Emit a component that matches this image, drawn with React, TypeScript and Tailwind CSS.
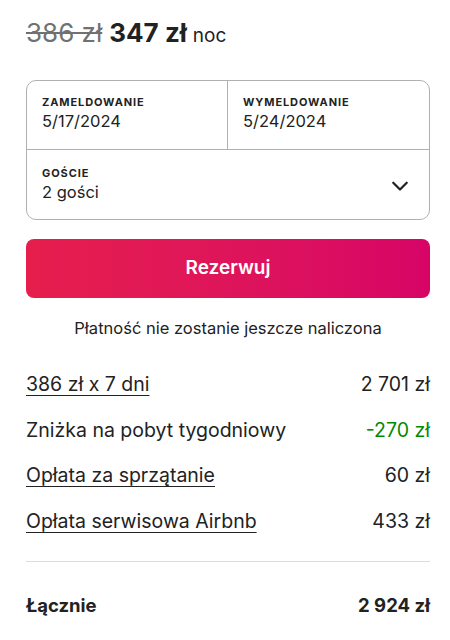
import React from "react";

const font = { fontFamily: "Inter, 'Noto Sans', sans-serif" };

function Row({ label, value, underline, green }: { label: string; value: string; underline?: boolean; green?: boolean }) {
  return (
    <div className="flex items-center justify-between h-[45.5px]">
      <span className={`text-[19.5px] text-[#222222] ${underline ? "underline underline-offset-[4px] decoration-[1px] decoration-[#222222]" : ""}`}>{label}</span>
      <span className={`text-[19.5px] ${green ? "text-[#008a05]" : "text-[#222222]"}`}>{value}</span>
    </div>
  );
}

export default function App() {
  return (
    <div className="w-[450px] h-[640px] bg-white pl-[26px] pr-[20px] overflow-hidden" style={font}>
      <div className="pt-[13px] flex items-baseline h-[63px]">
        <span className="text-[26px] text-[#717171] line-through">386 zł</span>
        <span className="text-[26px] font-bold text-[#222222] ml-[7px]">347 zł</span>
        <span className="text-[19px] text-[#222222] ml-[6px]">noc</span>
      </div>
      <div className="border border-[#b0b0b0] rounded-[10px] mt-[17px]">
        <div className="grid grid-cols-2 border-b border-[#b0b0b0]">
          <div className="pl-[15px] pt-[14px] h-[68px] border-r border-[#b0b0b0]">
            <div className="text-[11px] tracking-[0.9px] font-bold text-[#222222] leading-[14px]">ZAMELDOWANIE</div>
            <div className="text-[16.5px] text-[#222222] leading-[22px] mt-[1px]">5/17/2024</div>
          </div>
          <div className="pl-[15px] pt-[14px] h-[68px]">
            <div className="text-[11px] tracking-[0.9px] font-bold text-[#222222] leading-[14px]">WYMELDOWANIE</div>
            <div className="text-[16.5px] text-[#222222] leading-[22px] mt-[1px]">5/24/2024</div>
          </div>
        </div>
        <div className="flex items-center justify-between pl-[15px] pr-[20px] h-[69px]">
          <div>
            <div className="text-[11px] tracking-[0.9px] font-bold text-[#222222] leading-[14px]">GOŚCIE</div>
            <div className="text-[16.5px] text-[#222222] leading-[22px] mt-[1px]">2 gości</div>
          </div>
          <svg width="18" height="18" viewBox="0 0 32 32" fill="none" stroke="#222222" strokeWidth="4" strokeLinecap="round" strokeLinejoin="round">
            <path d="M28 12 16 24 4 12" />
          </svg>
        </div>
      </div>
      <button className="mt-[19px] w-full h-[59px] rounded-[8px] bg-gradient-to-r from-[#e61e4d] to-[#d70466] text-white text-[19px] font-semibold">
        Rezerwuj
      </button>
      <div className="text-center text-[16.5px] text-[#222222] mt-[20px] leading-[20px]">Płatność nie zostanie jeszcze naliczona</div>
      <div className="mt-[24px]">
        <Row label="386 zł x 7 dni" value="2 701 zł" underline />
        <Row label="Zniżka na pobyt tygodniowy" value="-270 zł" green />
        <Row label="Opłata za sprzątanie" value="60 zł" underline />
        <Row label="Opłata serwisowa Airbnb" value="433 zł" underline />
      </div>
      <div className="border-t border-[#dddddd] mt-[17px]" />
      <div className="flex items-center justify-between mt-[30px]">
        <span className="text-[18.5px] font-bold text-[#222222]">Łącznie</span>
        <span className="text-[18.5px] font-bold text-[#222222]">2 924 zł</span>
      </div>
    </div>
  );
}
